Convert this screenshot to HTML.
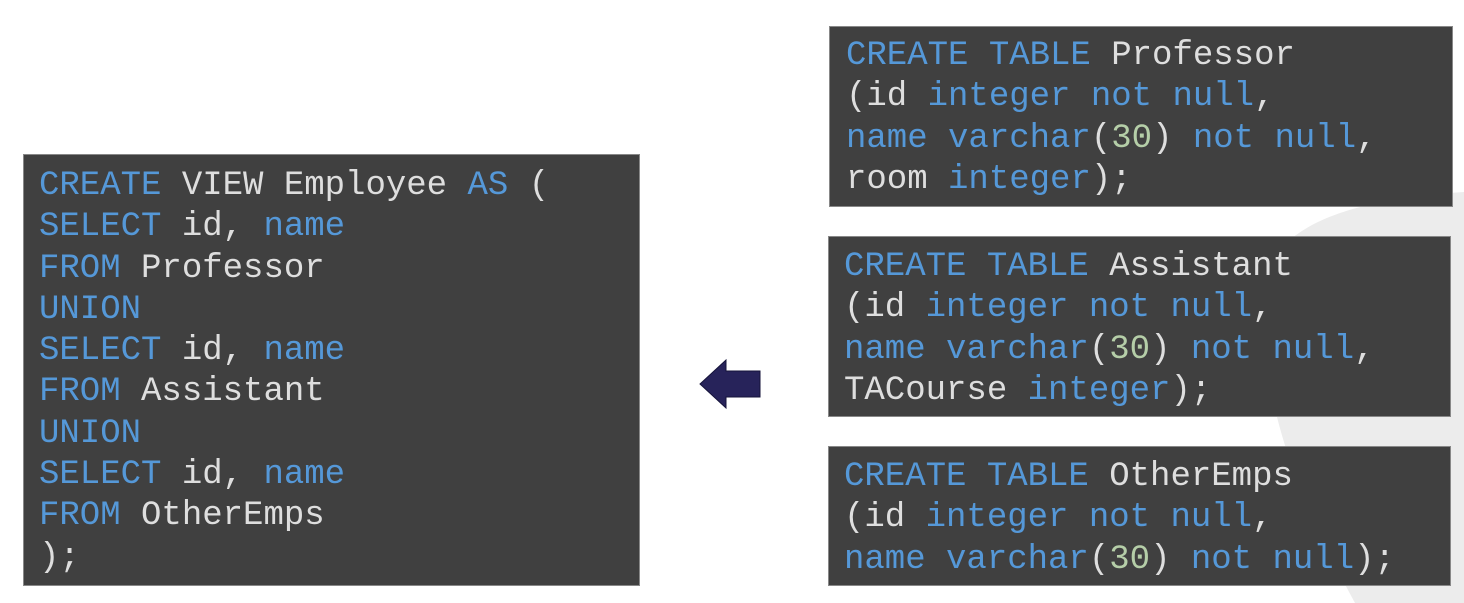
<!DOCTYPE html>
<html><head><meta charset="utf-8"><style>
html,body{margin:0;padding:0;background:#fff;width:1464px;height:603px;overflow:hidden;position:relative}
.box{position:absolute;background:#404040;box-shadow:0 0 0 1px #888;font-family:"Liberation Mono","Courier New",monospace;font-size:34px;line-height:41.3px;color:#dedede;white-space:pre;box-sizing:border-box}
.k{color:#5598d8}.n{color:#b5cea8}
</style></head><body>
<svg width="1464" height="603" style="position:absolute;left:0;top:0">
<path d="M1464 192 C1340 200 1262 230 1262 300 C1262 420 1310 520 1355 603 L1464 603 Z" fill="#ececec"/>
<path d="M700 384 L726 360 L726 371 L760 371 L760 397 L726 397 L726 408 Z" fill="#27235a" stroke="#15133a" stroke-width="1"/>
</svg>
<div class="box" style="left:24px;top:155px;width:615px;height:430px;padding:11px 0 0 15px"><span class="k">CREATE</span> VIEW Employee <span class="k">AS</span> (
<span class="k">SELECT</span> id, <span class="k">name</span>
<span class="k">FROM</span> Professor
<span class="k">UNION</span>
<span class="k">SELECT</span> id, <span class="k">name</span>
<span class="k">FROM</span> Assistant
<span class="k">UNION</span>
<span class="k">SELECT</span> id, <span class="k">name</span>
<span class="k">FROM</span> OtherEmps
);</div>
<div class="box" style="left:830px;top:27px;width:622px;height:179px;padding:9px 0 0 16px"><span class="k">CREATE TABLE</span> Professor
(id <span class="k">integer not null</span>,
<span class="k">name varchar</span>(<span class="n">30</span>) <span class="k">not null</span>,
room <span class="k">integer</span>);</div>
<div class="box" style="left:829px;top:237px;width:621px;height:179px;padding:10px 0 0 15px"><span class="k">CREATE TABLE</span> Assistant
(id <span class="k">integer not null</span>,
<span class="k">name varchar</span>(<span class="n">30</span>) <span class="k">not null</span>,
TACourse <span class="k">integer</span>);</div>
<div class="box" style="left:829px;top:447px;width:621px;height:138px;padding:10px 0 0 15px"><span class="k">CREATE TABLE</span> OtherEmps
(id <span class="k">integer not null</span>,
<span class="k">name varchar</span>(<span class="n">30</span>) <span class="k">not null</span>);</div>
</body></html>
